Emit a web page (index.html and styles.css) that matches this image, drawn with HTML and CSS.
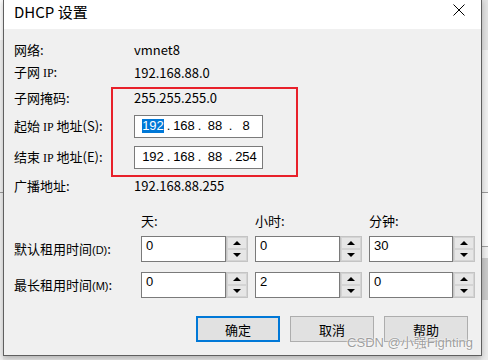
FILE: index.html
```html
<!DOCTYPE html>
<html lang="zh-CN">
<head>
    <meta charset="UTF-8">
    <title>DHCP 设置</title>
    <link rel="stylesheet" href="styles.css">
</head>
<body>
    <div class="desktop">
        <div class="dialog">
            <div class="titlebar">
                <span class="title">DHCP 设置</span>
                <svg class="close" width="12" height="12" viewBox="0 0 12 12">
                    <path d="M0.5 0.5 L11.5 11.5 M11.5 0.5 L0.5 11.5" stroke="#000" stroke-width="1" fill="none"/>
                </svg>
            </div>

            <div class="content">
                <div class="info">
                    <div class="label">网络:</div>
                    <div class="value">vmnet8</div>

                    <div class="label">子网 <span class="ip">IP</span>:</div>
                    <div class="value">192.168.88.0</div>

                    <div class="label">子网掩码:</div>
                    <div class="value">255.255.255.0</div>

                    <div class="label">起始 <span class="ip">IP</span> 地址(S):</div>
                    <div class="value">
                        <div class="ip-box">
                            <span class="ip-field selected">192</span><span class="ip-dot">.</span><span class="ip-field">168</span><span class="ip-dot">.</span><span class="ip-field">88</span><span class="ip-dot">.</span><span class="ip-field">8</span>
                        </div>
                    </div>

                    <div class="label">结束 <span class="ip">IP</span> 地址(E):</div>
                    <div class="value">
                        <div class="ip-box">
                            <span class="ip-field">192</span><span class="ip-dot">.</span><span class="ip-field">168</span><span class="ip-dot">.</span><span class="ip-field">88</span><span class="ip-dot">.</span><span class="ip-field">254</span>
                        </div>
                    </div>

                    <div class="label">广播地址:</div>
                    <div class="value">192.168.88.255</div>
                </div>

                <div class="lease">
                    <div></div>
                    <div class="unit">天:</div>
                    <div class="unit">小时:</div>
                    <div class="unit">分钟:</div>

                    <div class="label row-label">默认租用时间<span class="key">(D)</span>:</div>
                    <div class="spin"><div class="spin-field">0</div><div class="spin-btns"><span class="spin-btn"><i class="up"></i></span><span class="spin-btn"><i class="down"></i></span></div></div>
                    <div class="spin"><div class="spin-field">0</div><div class="spin-btns"><span class="spin-btn"><i class="up"></i></span><span class="spin-btn"><i class="down"></i></span></div></div>
                    <div class="spin"><div class="spin-field">30</div><div class="spin-btns"><span class="spin-btn"><i class="up"></i></span><span class="spin-btn"><i class="down"></i></span></div></div>

                    <div class="label row-label">最长租用时间<span class="key">(M)</span>:</div>
                    <div class="spin"><div class="spin-field">0</div><div class="spin-btns"><span class="spin-btn"><i class="up"></i></span><span class="spin-btn"><i class="down"></i></span></div></div>
                    <div class="spin"><div class="spin-field">2</div><div class="spin-btns"><span class="spin-btn"><i class="up"></i></span><span class="spin-btn"><i class="down"></i></span></div></div>
                    <div class="spin"><div class="spin-field">0</div><div class="spin-btns"><span class="spin-btn"><i class="up"></i></span><span class="spin-btn"><i class="down"></i></span></div></div>
                </div>

                <div class="actions">
                    <button class="btn default">确定</button>
                    <button class="btn">取消</button>
                    <button class="btn">帮助</button>
                </div>
            </div>
        </div>

        <!-- red annotation box -->
        <div class="mark-box"></div>

        <div class="watermark">CSDN @小强Fighting</div>
    </div>
</body>
</html>
```

FILE: styles.css
```css
body {
    margin: 0;
    font-family: "Noto Sans CJK SC", "Liberation Sans", sans-serif;
    font-size: 13px;
    color: #000;
}

.desktop {
    position: relative;
    width: 488px;
    height: 360px;
    overflow: hidden;
    background:
        linear-gradient(#fff 0 40px, #f2f2f2 40px 192px, #9a9a9a 192px 193px, #f0f0f0 193px) left top / 3px 100% no-repeat,
        linear-gradient(#e2e2e2 0 50px, #f0f0f0 50px 192px, #9a9a9a 192px 193px, #fafafa 193px 246px, #a0a0a0 246px 247px, #f0f0f0 247px 258px, #c9c9c9 258px 300px, #ececec 300px) right top / 7px 100% no-repeat,
        #e6e6e6;
}

.dialog {
    position: absolute;
    left: 3px;
    top: -1px;
    width: 479px;
    height: 357px;
    box-sizing: border-box;
    border: 1px solid #5f5f5f;
    background: #f0f0f0;
    box-shadow: 0 2px 6px rgba(0, 0, 0, 0.25);
}

.titlebar {
    height: 29px;
    background: #fff;
    display: flex;
    justify-content: space-between;
    align-items: flex-start;
    padding: 0 16px 0 10px;
}

.title {
    font-size: 15px;
    line-height: 22px;
    padding-top: 1px;
}

.close {
    margin-top: 4px;
}

.content {
    padding: 10px 13px 0 10px;
}

.info {
    display: grid;
    grid-template-columns: 120px auto;
    grid-template-rows: 22px 23px 27px 30px 32px 25px;
    align-items: center;
}

.label,
.value {
    line-height: 18px;
    white-space: nowrap;
}

.ip {
    font-family: "Liberation Serif", serif;
    font-size: 12px;
}

.key {
    font-family: "Liberation Sans", sans-serif;
    font-size: 11px;
}

.ip-box {
    width: 129px;
    height: 23px;
    box-sizing: border-box;
    border: 1px solid #7a7a7a;
    background: #fff;
    display: flex;
    align-items: center;
    padding-left: 7px;
    font-family: "Liberation Sans", sans-serif;
}

.ip-field {
    width: 22px;
    text-align: center;
    line-height: 14px;
}

.ip-field.selected {
    background: #0078d7;
    color: #fff;
}

.ip-dot {
    width: 9px;
    text-align: center;
}

.lease {
    margin-top: 13px;
    display: grid;
    grid-template-columns: 120px 107px 107px 106px;
    grid-template-rows: 25px 36px 26px;
    column-gap: 7px;
    align-items: start;
}

.unit {
    line-height: 20px;
}

.row-label {
    line-height: 26px;
}

.spin {
    display: flex;
    height: 26px;
}

.spin-field {
    flex: 1;
    border: 1px solid #7a7a7a;
    background: #fff;
    padding: 1px 4px;
    line-height: 16px;
    font-family: "Liberation Sans", sans-serif;
}

.spin-btns {
    width: 22px;
    box-sizing: border-box;
    border: 1px solid #c4c4c4;
    display: flex;
    flex-direction: column;
}

.spin-btn {
    flex: 1;
    background: #e6e6e6;
    border: 1px solid #d4d4d4;
    display: flex;
    align-items: center;
    justify-content: center;
}

.spin-btn i {
    width: 0;
    height: 0;
    border-left: 4px solid transparent;
    border-right: 4px solid transparent;
}

.spin-btn .up {
    border-bottom: 4px solid #000;
}

.spin-btn .down {
    border-top: 4px solid #000;
}

.actions {
    margin-top: 18px;
    display: flex;
    justify-content: flex-end;
    gap: 10px;
}

.btn {
    width: 84px;
    height: 26px;
    box-sizing: border-box;
    border: 1px solid #adadad;
    background: #e1e1e1;
    font-family: "Noto Sans CJK SC", sans-serif;
    font-size: 13px;
    padding: 0;
    color: #000;
}

.btn.default {
    border: 2px solid #0078d7;
}

.mark-box {
    position: absolute;
    left: 111px;
    top: 87px;
    width: 187px;
    height: 90px;
    box-sizing: border-box;
    border: 2px solid #e8202a;
}

.watermark {
    position: absolute;
    right: 15px;
    top: 334px;
    white-space: nowrap;
    font-family: "Liberation Sans", "Noto Sans CJK SC", sans-serif;
    font-size: 13px;
    line-height: 18px;
    color: rgba(140, 140, 140, 0.85);
    text-shadow: 0 0 2px #fff, 0 0 1px #fff;
}
```
